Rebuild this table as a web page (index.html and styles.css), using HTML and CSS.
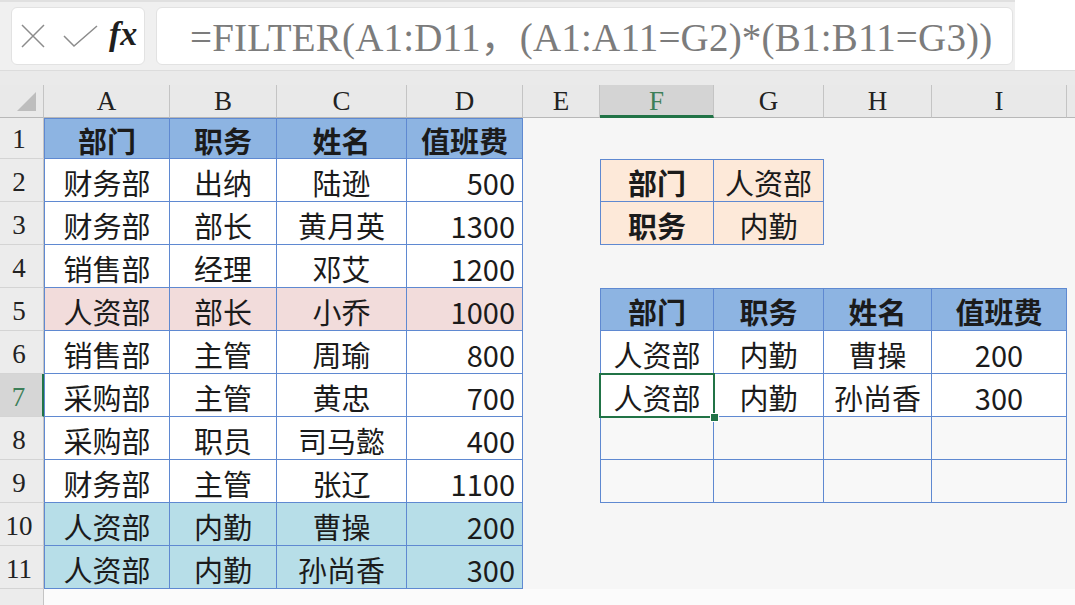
FILE: index.html
```html
<!DOCTYPE html>
<html lang="zh-CN">
<head>
<meta charset="utf-8">
<title>FILTER</title>
<link rel="stylesheet" href="styles.css">
</head>
<body>
<div class="fbar">
  <div class="namebox">
    <svg class="ico-x" width="26" height="26" viewBox="0 0 26 26"><path d="M2 2 L24 24 M24 2 L2 24" /></svg>
    <svg class="ico-check" width="36" height="24" viewBox="0 0 36 24"><path d="M2 12 L12 22 L35 2" /></svg>
    <span class="fx">fx</span>
  </div>
  <div class="formula"><span class="ftext">=FILTER(A1:D11，(A1:A11=G2)*(B1:B11=G3))</span></div>
</div>
<div class="strip"></div>
<div class="sheet">
  <div class="ch corner"><span class="tri"></span></div>
  <div class="ch">A</div><div class="ch">B</div><div class="ch">C</div><div class="ch">D</div><div class="ch">E</div>
  <div class="ch ch-sel">F</div><div class="ch">G</div><div class="ch">H</div><div class="ch">I</div><div class="ch ch-end"></div>

  <div class="rh">1</div>
  <div class="c h bl bt">部门</div><div class="c h bt">职务</div><div class="c h bt">姓名</div><div class="c h bt">值班费</div>
  <div class="e"></div><div class="e"></div><div class="e"></div><div class="e"></div><div class="e"></div><div class="e"></div>

  <div class="rh">2</div>
  <div class="c bl">财务部</div><div class="c">出纳</div><div class="c">陆逊</div><div class="c num">500</div>
  <div class="e"></div><div class="c pe b bl bt">部门</div><div class="c pe bt">人资部</div><div class="e"></div><div class="e"></div><div class="e"></div>

  <div class="rh">3</div>
  <div class="c bl">财务部</div><div class="c">部长</div><div class="c">黄月英</div><div class="c num">1300</div>
  <div class="e"></div><div class="c pe b bl">职务</div><div class="c pe">内勤</div><div class="e"></div><div class="e"></div><div class="e"></div>

  <div class="rh">4</div>
  <div class="c bl">销售部</div><div class="c">经理</div><div class="c">邓艾</div><div class="c num">1200</div>
  <div class="e"></div><div class="e"></div><div class="e"></div><div class="e"></div><div class="e"></div><div class="e"></div>

  <div class="rh">5</div>
  <div class="c pk bl">人资部</div><div class="c pk">部长</div><div class="c pk">小乔</div><div class="c pk num">1000</div>
  <div class="e"></div><div class="c h bl bt">部门</div><div class="c h bt">职务</div><div class="c h bt">姓名</div><div class="c h bt">值班费</div><div class="e"></div>

  <div class="rh">6</div>
  <div class="c bl">销售部</div><div class="c">主管</div><div class="c">周瑜</div><div class="c num">800</div>
  <div class="e"></div><div class="c bl">人资部</div><div class="c">内勤</div><div class="c">曹操</div><div class="c">200</div><div class="e"></div>

  <div class="rh rh-sel">7</div>
  <div class="c bl">采购部</div><div class="c">主管</div><div class="c">黄忠</div><div class="c num">700</div>
  <div class="e"></div><div class="c bl sel">人资部</div><div class="c">内勤</div><div class="c">孙尚香</div><div class="c">300</div><div class="e"></div>

  <div class="rh">8</div>
  <div class="c bl">采购部</div><div class="c">职员</div><div class="c">司马懿</div><div class="c num">400</div>
  <div class="e"></div><div class="c blank bl"></div><div class="c blank"></div><div class="c blank"></div><div class="c blank"></div><div class="e"></div>

  <div class="rh">9</div>
  <div class="c bl">财务部</div><div class="c">主管</div><div class="c">张辽</div><div class="c num">1100</div>
  <div class="e"></div><div class="c blank bl"></div><div class="c blank"></div><div class="c blank"></div><div class="c blank"></div><div class="e"></div>

  <div class="rh">10</div>
  <div class="c aq bl">人资部</div><div class="c aq">内勤</div><div class="c aq">曹操</div><div class="c aq num">200</div>
  <div class="e"></div><div class="e"></div><div class="e"></div><div class="e"></div><div class="e"></div><div class="e"></div>

  <div class="rh">11</div>
  <div class="c aq bl">人资部</div><div class="c aq">内勤</div><div class="c aq">孙尚香</div><div class="c aq num">300</div>
  <div class="e"></div><div class="e"></div><div class="e"></div><div class="e"></div><div class="e"></div><div class="e"></div>

  <div class="rh rh-end"></div>
  <div class="tail"></div>
</div>
</body>
</html>
```

FILE: styles.css
```css
html, body {
  margin: 0;
  padding: 0;
}
body {
  width: 1075px;
  height: 605px;
  overflow: hidden;
  background: #ffffff;
  font-family: "Noto Sans CJK SC", sans-serif;
}

/* formula bar */
.fbar {
  display: flex;
  gap: 11px;
  width: 1015px;
  height: 70px;
  box-sizing: border-box;
  padding: 5px 0 0 11px;
  background: #f0f0f0;
  border-top: 2px solid #e0e0e0;
}
.namebox {
  width: 134px;
  height: 58px;
  box-sizing: border-box;
  background: #ffffff;
  border: 1px solid #e2e2e2;
  border-radius: 6px;
  display: flex;
  align-items: center;
  padding-left: 8px;
}
.ico-x path, .ico-check path {
  fill: none;
  stroke: #8c8c8c;
  stroke-width: 1.5;
}
.ico-check {
  margin-left: 16px;
}
.fx {
  margin-left: 11px;
  font-family: "Liberation Serif", serif;
  font-style: italic;
  font-weight: 700;
  font-size: 34px;
  color: #1e1e1e;
  line-height: 1;
  margin-top: -4px;
}
.formula {
  width: 857px;
  height: 58px;
  box-sizing: border-box;
  background: #ffffff;
  border: 1px solid #e2e2e2;
  border-radius: 6px;
  display: flex;
  align-items: center;
  padding-left: 33px;
  overflow: hidden;
}
.ftext {
  flex: none;
  font-family: "Liberation Serif", "Noto Sans CJK SC", serif;
  font-size: 39px;
  line-height: 1;
  color: #7c7c7c;
  white-space: nowrap;
  letter-spacing: 0.2px;
  margin-top: 2px;
}

.strip {
  height: 15px;
  background: #eaeaea;
  border-top: 1px solid #dcdcdc;
  box-sizing: border-box;
}

/* sheet grid */
.sheet {
  --b: #5f89d1;
  display: grid;
  grid-template-columns: 44px 126px 107px 130px 116px 77px 114px 110px 108px 135px 1fr;
  grid-template-rows: 33px 41px repeat(10, 43px) 1fr;
  height: 520px;
  background: #f6f6f6;
}
.ch {
  box-sizing: border-box;
  background: #e9e9e9;
  border-right: 1px solid #c4c4c4;
  border-bottom: 1px solid #b8b8b8;
  display: flex;
  justify-content: center;
  align-items: flex-end;
  padding-bottom: 2px;
  font-family: "Liberation Serif", serif;
  font-size: 27px;
  line-height: 1;
  color: #222222;
}
.ch-sel {
  background: #d4d4d4;
  border-bottom: 3px solid #217346;
  padding-bottom: 0;
  color: #3d7f58;
}
.ch-end {
  border-right: none;
}
.corner {
  position: relative;
}
.tri {
  position: absolute;
  right: 7px;
  bottom: 6px;
  width: 19px;
  height: 19px;
  background: #bdbdbd;
  clip-path: polygon(100% 0, 100% 100%, 0 100%);
}
.rh {
  box-sizing: border-box;
  background: #ececec;
  border-right: 1px solid #c4c4c4;
  border-bottom: 1px solid #d4d4d4;
  display: flex;
  justify-content: center;
  align-items: flex-end;
  padding: 0 5px 5px 0;
  font-family: "Liberation Serif", serif;
  font-size: 27px;
  line-height: 1;
  color: #222222;
}
.rh-sel {
  background: #d6d6d6;
  border-right: 2px solid #217346;
  color: #3d7f58;
}
.rh-end {
  border-bottom: none;
}
.tail {
  grid-column: span 10;
  background: #fbfbfb;
}

.c {
  box-sizing: border-box;
  background: #ffffff;
  border-right: 1px solid var(--b);
  border-bottom: 1px solid var(--b);
  display: flex;
  justify-content: center;
  align-items: center;
  padding-top: 4px;
  font-size: 29px;
  line-height: 1;
  color: #1b1b1b;
  white-space: nowrap;
}
.bl { border-left: 1px solid var(--b); }
.bt { border-top: 1px solid var(--b); }
.h { background: #8db4e2; font-weight: 700; }
.b { font-weight: 700; }
.pk { background: #f2dcdb; }
.aq { background: #b7dee8; }
.pe { background: #fde9d9; }
.blank { background: #f8f8f8; }
.num {
  justify-content: flex-end;
  padding-right: 7px;
}
.sel {
  position: relative;
}
.sel::after {
  content: "";
  position: absolute;
  left: -2px;
  top: -1px;
  right: -2px;
  bottom: -2px;
  border: 2px solid #217346;
}
.sel::before {
  content: "";
  position: absolute;
  right: -6px;
  bottom: -6px;
  width: 7px;
  height: 7px;
  background: #217346;
  border: 1px solid #ffffff;
  z-index: 2;
}
```
